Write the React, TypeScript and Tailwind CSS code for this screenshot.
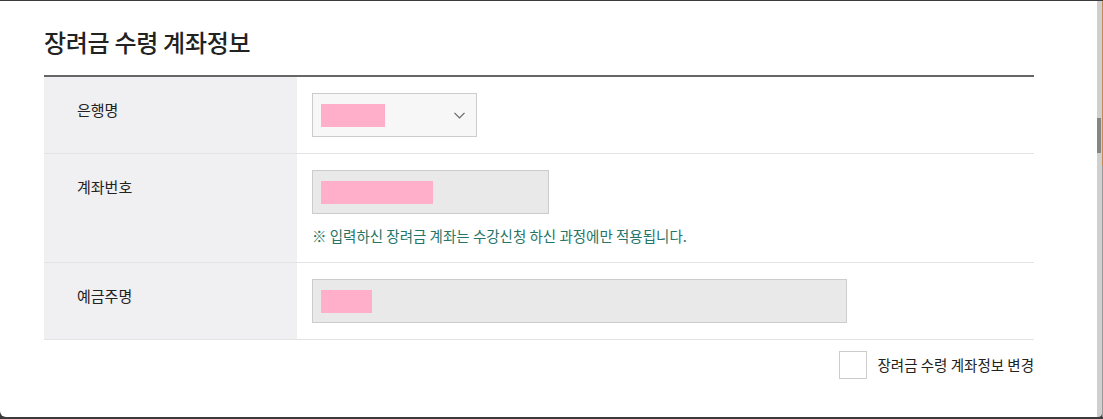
const font = '"Noto Sans CJK KR", "Noto Sans", sans-serif';

function Pink({ w }: { w: number }) {
  return <div className="h-[23px] bg-[#ffafc9]" style={{ width: w }} />;
}

function Row({ label, children }: { label: string; children: React.ReactNode }) {
  return (
    <div className="flex border-b border-[#e3e3e3]">
      <div className="w-[253px] shrink-0 bg-[#f0f0f2] pl-[33px] pt-[23px] text-[15px] leading-[20px] text-[#222]">
        {label}
      </div>
      <div className="flex-1 pl-[15px] py-4">{children}</div>
    </div>
  );
}

export default function App() {
  return (
    <div className="w-[1103px] h-[419px] bg-[#3b3b3b] pt-px overflow-hidden" style={{ fontFamily: font }}>
      <div className="flex h-[416px]">
        <div className="flex-1 bg-white rounded-bl-md pl-[44px] pr-[63px]">
          <h2 className="pt-[26px] text-[24px] leading-[30px] text-[#222] font-medium tracking-[-0.3px]">
            장려금 수령 계좌정보
          </h2>

          <div className="mt-[18px] border-t-2 border-[#666]">
            <Row label="은행명">
              <div className="w-[165px] h-[44px] bg-[#f7f7f7] border border-[#cccccc] flex items-center justify-between pl-2 pr-[11px]">
                <Pink w={64} />
                <svg width="11" height="7" viewBox="0 0 11 7" fill="none" stroke="#666" strokeWidth="1.2">
                  <polyline points="0.5,0.8 5.5,5.8 10.5,0.8" />
                </svg>
              </div>
            </Row>
            <Row label="계좌번호">
              <div className="w-[237px] h-[44px] bg-[#e9e9e9] border border-[#cccccc] flex items-center pl-2">
                <Pink w={112} />
              </div>
              <p className="mt-3 text-[14.5px] leading-[20px] text-[#267568]">
                ※ 입력하신 장려금 계좌는 수강신청 하신 과정에만 적용됩니다.
              </p>
            </Row>
            <Row label="예금주명">
              <div className="w-[535px] h-[44px] bg-[#e9e9e9] border border-[#cccccc] flex items-center pl-2">
                <Pink w={51} />
              </div>
            </Row>
          </div>

          <label className="mt-[11px] flex items-center justify-end gap-[11px]">
            <span className="w-[28px] h-[28px] border border-[#cccccc] bg-white" />
            <span className="text-[14.5px] leading-[20px] text-[#222]">장려금 수령 계좌정보 변경</span>
          </label>
        </div>

        <div className="w-[5px] bg-[#cfcfcf] rounded-br-sm flex flex-col">
          <div className="h-[117px]" />
          <div className="h-[35px] w-[4px] bg-[#858585]" />
        </div>
        <div className="w-px flex flex-col">
          <div className="h-[165px] bg-[#c98a52]" />
          <div className="flex-1 bg-[#9a9a9a]" />
        </div>
      </div>
    </div>
  );
}
